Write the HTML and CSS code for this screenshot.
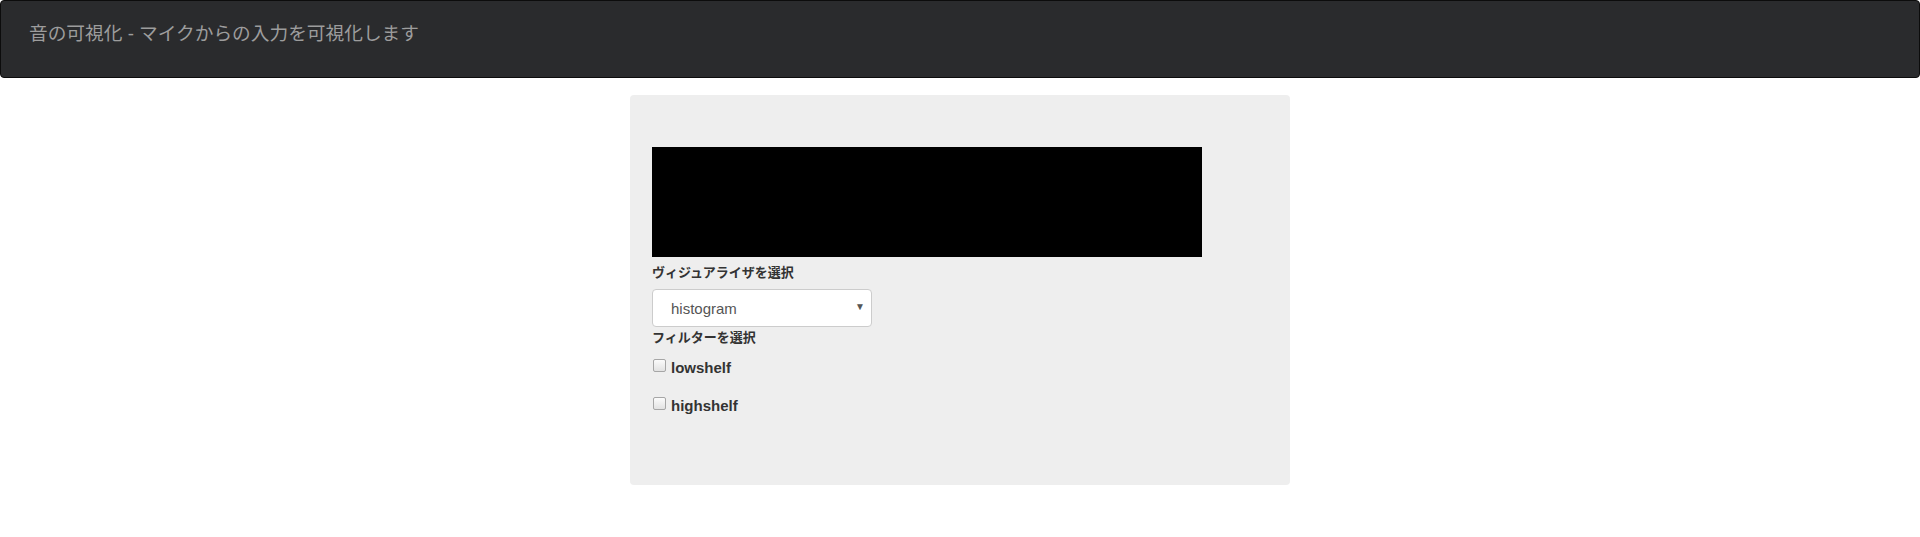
FILE: index.html
```html
<!DOCTYPE html>
<html lang="ja">
<head>
<meta charset="utf-8">
<title>音の可視化</title>
<link rel="stylesheet" href="styles.css">
</head>
<body>
<nav class="navbar">
  <span class="brand">音の可視化 - マイクからの入力を可視化します</span>
</nav>
<main class="panel">
  <div class="canvas"></div>
  <label class="field-label">ヴィジュアライザを選択</label>
  <div class="select-wrap">
    <select class="select">
      <option>histogram</option>
    </select>
  </div>
  <label class="field-label field-label-tight">フィルターを選択</label>
  <div class="checks">
    <label class="check"><input type="checkbox" class="box"><span>lowshelf</span></label>
    <label class="check"><input type="checkbox" class="box"><span>highshelf</span></label>
  </div>
</main>
</body>
</html>
```

FILE: styles.css
```css
* { box-sizing: border-box; }

body {
  margin: 0;
  background: #fff;
  font-family: "Liberation Sans", "Noto Sans CJK JP", sans-serif;
  color: #333;
}

.navbar {
  height: 78px;
  background: #2a2b2d;
  border: 1px solid #0c0c0c;
  border-radius: 4px;
  padding: 23px 0 0 28px;
}

.brand {
  display: block;
  font-size: 18.7px;
  line-height: 20px;
  color: #9d9d9d;
}

.panel {
  width: 660px;
  margin: 17px auto 0;
  background: #eee;
  border-radius: 4px;
  padding: 52px 22px 54px;
}

.canvas {
  width: 550px;
  height: 110px;
  background: #000;
}

.field-label {
  display: block;
  font-size: 13px;
  font-weight: bold;
  line-height: 20px;
  margin-top: 6px;
  margin-bottom: 6px;
}

.field-label-tight {
  margin-top: 1px;
  margin-bottom: 0;
}

.select-wrap {
  position: relative;
  width: 220px;
}

.select-wrap::after {
  content: "\25BC";
  position: absolute;
  right: 7px;
  top: 12px;
  font-size: 10px;
  color: #555;
  pointer-events: none;
}

.select {
  display: block;
  width: 220px;
  height: 38px;
  -webkit-appearance: none;
  appearance: none;
  background: #fff;
  border: 1px solid #ccc;
  border-radius: 4px;
  padding: 0 18px;
  font-family: "Liberation Sans", sans-serif;
  font-size: 15px;
  color: #555;
}

.checks {
  margin-top: 10px;
  margin-bottom: 15px;
  display: flex;
  flex-direction: column;
  gap: 18px;
}

.check {
  display: flex;
  align-items: flex-start;
  gap: 5px;
  line-height: 20px;
  font-size: 15px;
  font-weight: bold;
}

.box {
  -webkit-appearance: none;
  appearance: none;
  width: 13px;
  height: 13px;
  margin: 1px 0 0 1px;
  border: 1px solid #a6a6a6;
  border-radius: 2px;
  background: linear-gradient(#fbfbfb, #e2e2e2);
}
```
